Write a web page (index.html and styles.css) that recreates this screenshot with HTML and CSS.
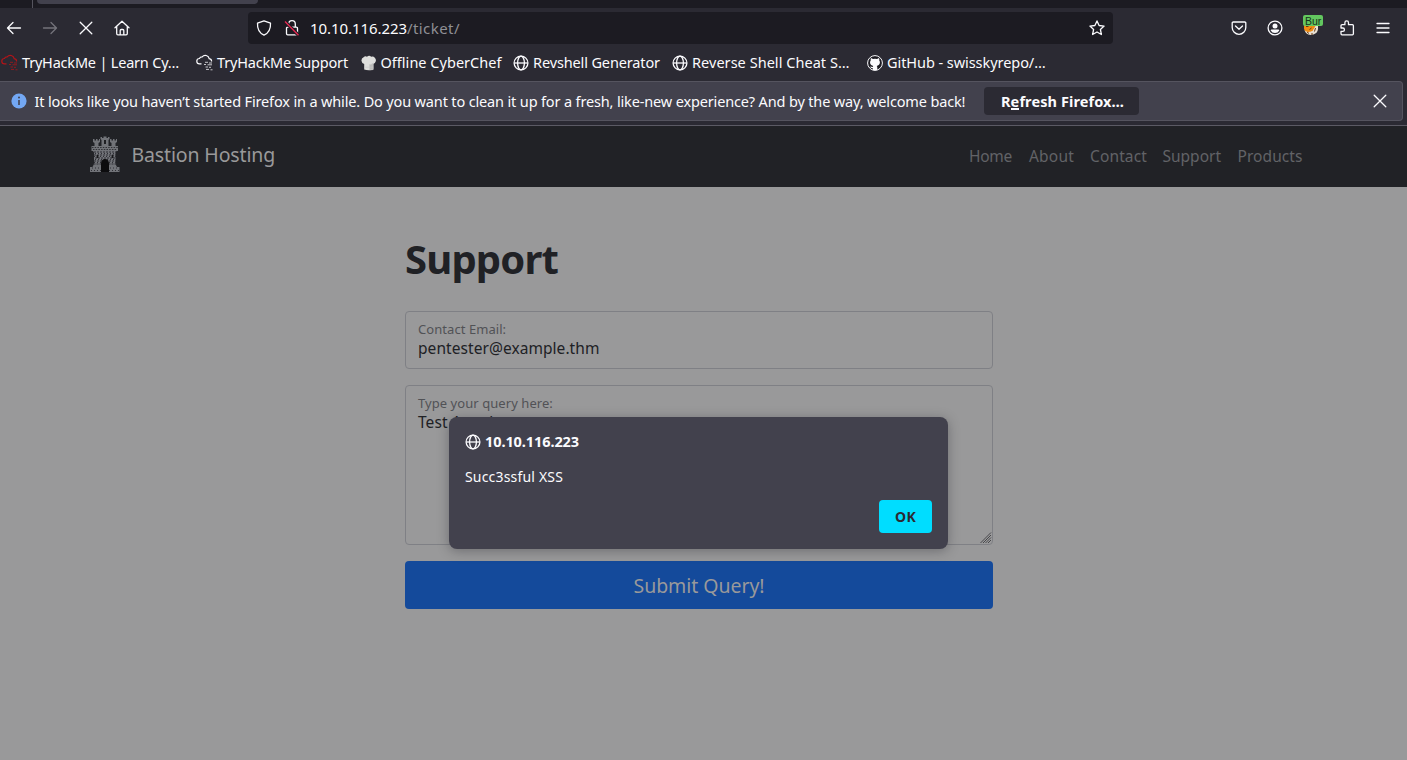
FILE: index.html
```
<!DOCTYPE html>
<html lang="en">
<head>
<meta charset="utf-8">
<title>Bastion Hosting</title>
<link rel="stylesheet" href="styles.css">
</head>
<body>
<svg width="0" height="0" class="defs">
  <symbol id="globe" viewBox="0 0 16 16"><g fill="none" stroke="currentColor" stroke-width="1.3"><circle cx="8" cy="8" r="6.9"/><ellipse cx="8" cy="8" rx="3.4" ry="6.9"/><path d="M1.2 8h13.6"/></g></symbol>
  <symbol id="cloud" viewBox="0 0 18 18"><path d="M5.500 9.900H3.600A2.700 2.700 0 0 1 3.400 4.500 3 3 0 0 1 6.200 2.800 4 4 0 0 1 13.200 4.600 2.800 2.800 0 0 1 15.600 7.500" fill="none" stroke="currentColor" stroke-width="1.200"/><path d="M9 8.300h3M13 9h3M8 10.500h2M11.500 10.800h4.500M9.500 13h2.500M13 13.300h2M10 15.400h3M14.500 15.800h2" stroke="currentColor" stroke-width="1" stroke-opacity=".75"/></symbol>
</svg>

<div class="tabstrip"><div class="pinned"></div><div class="tab"></div></div>

<div class="toolbar">
  <div class="nav-buttons">
    <svg width="16" height="16" viewBox="0 0 16 16"><path d="M14.5 8H2M7 2.5 1.5 8 7 13.5" class="line"/></svg>
    <svg width="16" height="16" viewBox="0 0 16 16" class="disabled"><path d="M1.5 8H14M9 2.5 14.500 8 9 13.5" class="line"/></svg>
    <svg width="16" height="16" viewBox="0 0 16 16"><path d="M2.200 2.200l11.600 11.600M13.800 2.200 2.200 13.800" class="line"/></svg>
    <svg width="16" height="16" viewBox="0 0 16 16"><path d="M1 7.700 8 1.200l7 6.500M2.700 6.500v7.100a1.200 1.200 0 0 0 1.200 1.200h8.200a1.200 1.200 0 0 0 1.200-1.200V6.500M6.200 14.800v-4.300a1 1 0 0 1 1-1h1.600a1 1 0 0 1 1 1v4.300" class="line"/></svg>
  </div>
  <div class="urlbar">
    <svg width="16" height="16" viewBox="0 0 16 16"><path d="M8 .8 14.500 3.100c.3 5.200-1.200 9.600-6.500 12.100C2.700 12.700 1.200 8.300 1.500 3.100z" class="line"/></svg>
    <svg width="16" height="16" viewBox="0 0 16 16" class="lock"><path d="M4.700 7V4a3.300 3.300 0 0 1 6.600 0v3M3.700 7.200h8.600a1.200 1.200 0 0 1 1.200 1.200v5.200a1.200 1.200 0 0 1-1.200 1.200H3.700a1.200 1.200 0 0 1-1.200-1.200V8.400a1.200 1.200 0 0 1 1.200-1.200z" class="line"/><path d="M1 1.500l13.500 13.700" stroke="#1c1b22" stroke-width="3.400"/><path d="M1 1.500l13.500 13.700" stroke="#e22850" stroke-width="1.400"/></svg>
    <div class="url"><span class="host">10.10.116.223</span><span class="path">/ticket/</span></div>
    <svg width="16" height="16" viewBox="0 0 16 16"><path d="M8 .9l2.100 4.600 5 .6-3.700 3.400 1 5L8 12l-4.400 2.500 1-5L.9 6.100l5-.6z" class="line"/></svg>
  </div>
  <div class="tools">
    <svg width="16" height="16" viewBox="0 0 16 16"><path d="M2.300 2h11.400a1.100 1.100 0 0 1 1.100 1.100V7.500a6.800 6.800 0 0 1-13.600 0V3.100A1.100 1.100 0 0 1 2.300 2zM4.500 6 8 9.300 11.500 6" class="line"/></svg>
    <svg width="16" height="16" viewBox="0 0 16 16"><circle cx="8" cy="8" r="6.900" class="line"/><circle cx="8" cy="5.900" r="2.500" fill="#fbfbfe"/><path d="M3.700 10.400a1 1 0 0 1 1-.9h6.600a1 1 0 0 1 1 .9A5 5 0 0 1 8 13a5 5 0 0 1-4.300-2.600z" fill="#fbfbfe"/></svg>
    <div class="proxy">
      <svg width="16" height="16" viewBox="0 0 16 16"><path d="M1 4h14v4a7.300 7 0 0 1-14 1z" fill="#f08c12"/><path d="M1 9.500c1.500 2.500 5 3.200 8 1.300l2.500-3.300 1-1.500h2.500v3a7 6.200 0 0 1-12 4z" fill="#e8dfd2"/><path d="M5 9.500l4-3.500h3l-2.500 5-2.500.5z" fill="#ee8a10"/><path d="M3 6.500h2.500M8.500 8l-2 1.500M12.500 8l-1 3.500M4 12l2 1.500M8 14h2" stroke="#6a3a12"/></svg>
      <span class="badge">Bur</span>
    </div>
    <svg width="16" height="16" viewBox="0 0 16 16"><path d="M2 6.200V5.700a1 1 0 0 1 1-1h2.900V2.700a1.800 1.800 0 0 1 3.600 0v2h3.900a1 1 0 0 1 1 1v8.100a1 1 0 0 1-1 1H3a1 1 0 0 1-1-1v-2.500h1.800a1.600 1.600 0 0 0 0-3.300H2z" class="line"/></svg>
    <svg width="16" height="16" viewBox="0 0 16 16"><path d="M2 3.500h12M2 8h12M2 12.500h12" class="line"/></svg>
  </div>
</div>

<div class="bookmarks">
  <div class="bookmark thm"><svg width="18" height="18" class="red"><use href="#cloud"/></svg><span class="t1">TryHackMe | Learn Cy…</span></div>
  <div class="bookmark sup"><svg width="18" height="18"><use href="#cloud"/></svg><span class="t2">TryHackMe Support</span></div>
  <div class="bookmark chef"><svg width="16" height="16" viewBox="0 0 16 16"><path d="M3.200 14.500V9A3.600 3.600 0 0 1 2.600 2.200 3 3 0 0 1 6 1.700a3 3 0 0 1 4.200.1 3.200 3.200 0 0 1 3.600 1 3.700 3.700 0 0 1-1.600 6.200v5.500c-2.500 1-6.500 1-9 0z" fill="#dededc"/><path d="M8.500 9.500c1.800 0 3-.7 3.700-1.500v6.500l-3.700.5zM3.200 12.200h9" fill="#bcbcba" stroke="#c9c9c7" stroke-width=".6"/></svg><span class="t3">Offline CyberChef</span></div>
  <div class="bookmark rev"><svg width="16" height="16"><use href="#globe"/></svg><span class="t4">Revshell Generator</span></div>
  <div class="bookmark cheat"><svg width="16" height="16"><use href="#globe"/></svg><span class="t5">Reverse Shell Cheat S…</span></div>
  <div class="bookmark git"><svg width="16" height="16" viewBox="0 0 16 16"><circle cx="8" cy="8" r="7.400" fill="#1c1b22" stroke="#fbfbfe" stroke-width="1"/><path d="M4 3l2 1.100a7 7 0 0 1 4 0L12 3c.5 1 .4 1.700.2 2.300 1.300 1.700 1 5.200-2.500 5.600.5.600.6 1 .6 1.700v2.300a7 7 0 0 1-4.600 0V13c-1.500.3-2-.4-2.500-1.500l2.600.4c0-.4.1-.7.5-1C2.800 10.500 2.500 7 3.800 5.300 3.600 4.700 3.500 4 4 3z" fill="#fbfbfe"/></svg><span class="t6">GitHub - swisskyrepo/…</span></div>
</div>

<div class="notice">
  <svg width="16" height="16" viewBox="0 0 16 16"><circle cx="8" cy="8" r="7.600" fill="#73a7f3"/><path d="M8 7v5" stroke="#42414d" stroke-width="1.600"/><circle cx="8" cy="4.500" r="1" fill="#42414d"/></svg>
  <span class="notice-text">It looks like you haven’t started Firefox in a while. Do you want to clean it up for a fresh, like-new experience? And by the way, welcome back!</span>
  <button class="refresh">R<span class="key">e</span>fresh Firefox…</button>
  <svg class="close" width="14" height="14" viewBox="0 0 14 14"><path d="M1.200 1.200l11.600 11.600M12.800 1.200 1.200 12.800" class="line"/></svg>
</div>

<div class="page">
  <header class="site-header">
    <svg class="castle" width="32" height="36" viewBox="0 0 32 36">
      <path d="M4 3h1.500v1.500H7V3h1.500v1.500H10V3h1v3L9.500 7v3h3V4L11.500 3V1H13v1h1.500V.5h3V2H19V1h1.500v2l-1 1v6h3V7L21 6V3h1.500v1.500H24V3h1.500v1.500H27V3h1v3l-1.500 1v3H29v5h-1.500l-1 1.500V28l1.500 3h2.500v5H1v-5h2.500L5 28V16.500L4 15H2.500v-5h3V7L4 6z" fill="#717378"/>
      <path d="M3 11.500h26M4 13.500h24" stroke="#303136" stroke-dasharray="1.500 1.200"/>
      <path d="M5 16h22M5 19h22M6 22h20M5 25h22M4.500 28h23" stroke="#303136" stroke-width="1" stroke-dasharray="2 1"/>
      <path d="M6 17.500h20M5 20.500h22M6 23.500h20M5 26.500h22M3 32h27M2 34.500h28" stroke="#303136" stroke-width="1" stroke-dasharray="1 2"/>
      <path d="M8.500 19v3M23.500 19v3M16 4v4" stroke="#17181b" stroke-width="1.800"/>
      <path d="M12 36v-8.500a4 4.500 0 0 1 8 0V36z" fill="#0c0c0e"/>
    </svg>
    <span class="brand">Bastion Hosting</span>
    <nav><a class="home">Home</a><a class="about">About</a><a class="contact">Contact</a><a class="support">Support</a><a class="products">Products</a></nav>
  </header>
  <main>
    <h1>Support</h1>
    <div class="field email"><label>Contact Email:</label><div class="value">pentester@example.thm</div></div>
    <div class="field query"><label>Type your query here:</label><div class="value">Test Attack</div>
      <svg class="grip" width="12" height="12" viewBox="0 0 12 12"><path d="M.5 11 11 .5M3 11l8-8M5.500 11 11 5.500M8 11l3-3" stroke="#47474a" stroke-width="1"/></svg>
    </div>
    <button class="submit">Submit Query!</button>
  </main>
</div>

<div class="dialog">
  <div class="origin"><svg width="16" height="16"><use href="#globe"/></svg><span>10.10.116.223</span></div>
  <div class="message">Succ3ssful XSS</div>
  <div class="actions"><button class="ok">OK</button></div>
</div>
</body>
</html>
```

FILE: styles.css
```
* { box-sizing: border-box; }
body {
  margin: 0;
  width: 1407px;
  height: 760px;
  overflow: hidden;
  background: #2b2a33;
  color: #fbfbfe;
  font-family: "Noto Sans", sans-serif;
  font-size: 14.5px;
  white-space: nowrap;
}
button { font-family: inherit; border: 0; padding: 0; }
svg { display: block; flex: none; }
.defs { position: absolute; }
.line { fill: none; stroke: currentColor; stroke-width: 1.3; stroke-linejoin: round; stroke-linecap: round; }

.tabstrip { display: flex; height: 8px; background: #1c1b22; }
.pinned { width: 33px; border-right: 1px solid #55545e; }
.tab { width: 221px; height: 4px; margin-left: 4px; background: #42414d; border-radius: 0 0 4px 4px; }

.toolbar { display: flex; align-items: center; height: 40px; padding-left: 6px; }
.nav-buttons { display: flex; gap: 20px; width: 242px; }
.disabled { color: #74737b; }
.urlbar {
  display: flex;
  align-items: center;
  width: 865px;
  height: 32px;
  padding: 0 8px;
  background: #1c1b22;
  border-radius: 4px;
}
.lock { margin-left: 12px; }
.url { flex: 1; margin-left: 10px; font-size: 15px; line-height: 20px; }
.host { letter-spacing: -0.07px; }
.path { letter-spacing: 0.43px; color: #8f8f95; }
.tools { display: flex; gap: 20px; margin-left: 118px; }
.proxy { position: relative; width: 16px; height: 16px; }
.badge {
  position: absolute;
  left: 0;
  top: -5px;
  width: 20px;
  height: 11px;
  padding-left: 2px;
  background: #63c75f;
  border-radius: 2px;
  color: #16321a;
  font: 10.5px/12px "Liberation Sans", sans-serif;
}

.bookmarks { display: flex; height: 33px; padding-bottom: 3px; align-items: center; }
.bookmark { display: flex; align-items: center; height: 20px; line-height: 18px; gap: 3px; }
.bookmark span { padding-bottom: 2px; }
.thm { width: 196px; padding-left: 1px; }
.sup { width: 164.500px; }
.chef { width: 152.500px; }
.rev { width: 159px; }
.cheat { width: 195px; }
.red { color: #b31419; }
.t1 { letter-spacing: -0.2px; }
.t2 { letter-spacing: -0.19px; }
.t3 { letter-spacing: 0.02px; margin-left: 1px; }
.t4 { letter-spacing: -0.13px; margin-left: 1px; }
.t5 { letter-spacing: 0.04px; margin-left: 1px; }
.t6 { letter-spacing: -0.06px; margin-left: 1px; }

.notice {
  display: flex;
  align-items: center;
  width: 1403px;
  height: 40px;
  padding-left: 11px;
  background: #42414d;
  border: 1px solid #55545f;
  border-left: 0;
  border-radius: 0 4px 4px 0;
}
.notice-text { width: 948.500px; margin-left: 7.500px; letter-spacing: -0.15px; line-height: 20px; }
.refresh {
  width: 155px;
  height: 28px;
  margin-left: 1px;
  padding-left: 2px;
  background: #2b2a33;
  border-radius: 4px;
  color: #fbfbfe;
  font-size: 14.5px;
  font-weight: 700;
  line-height: 28px;
  letter-spacing: 0.1px;
}
.key { border-bottom: 2px solid #fbfbfe; display: inline-block; line-height: 14px; }
.close { margin-left: 234px; }

.page { height: 635px; margin-top: 4px; border-top: 1px solid #5b5a64; background: #99999a; color: #202125; }
.site-header { display: flex; align-items: center; height: 61px; padding-left: 89px; background: #212226; }
.castle { margin-top: -6px; }
.brand { width: 837px; margin: -5px 0 0 10.500px; color: #99999a; font-size: 19.5px; letter-spacing: -0.14px; }
nav { display: flex; margin-top: -2px; padding-left: 0.500px; color: #626367; font-size: 15.5px; }
.home { width: 60px; letter-spacing: -0.28px; }
.about { width: 61px; letter-spacing: 0.2px; }
.contact { width: 72.5px; letter-spacing: 0.13px; }
.support { width: 75px; }
.products { letter-spacing: 0.07px; }

main { display: flex; flex-direction: column; width: 588px; margin-left: 405px; }
h1 { margin: 48px 0 28px; font-size: 40px; line-height: 48px; letter-spacing: -0.83px; }
.field { position: relative; margin-bottom: 16px; padding: 8px 12px; border: 1px solid #7f8085; border-radius: 4px; }
.email { height: 58px; }
.query { height: 160px; }
.field label { display: block; color: #515256; font-size: 13px; line-height: 19px; letter-spacing: 0.06px; }
.value { font-size: 15.5px; line-height: 19px; letter-spacing: 0.06px; }
.grip { position: absolute; right: 0; bottom: 0; }
.submit { height: 48px; background: #144a9b; border-radius: 4px; color: #99999a; font-size: 19.5px; letter-spacing: -0.05px; }

.dialog {
  position: absolute;
  left: 449px;
  top: 417px;
  width: 499px;
  height: 132px;
  padding: 16px;
  background: #42414d;
  border-radius: 8px;
  box-shadow: 0 2px 12px rgba(30, 30, 36, 0.35);
}
.origin { display: flex; align-items: center; gap: 4px; height: 18px; font-weight: 700; letter-spacing: -0.09px; }
.origin span { margin-top: -2px; }
.message { margin-top: 16px; font-size: 14px; line-height: 20px; letter-spacing: 0.18px; }
.actions { display: flex; justify-content: flex-end; margin-top: 13px; }
.ok { width: 53px; height: 33px; background: #00ddff; border-radius: 4px; color: #2b2a33; font-size: 14px; font-weight: 700; letter-spacing: 0.31px; }
```
